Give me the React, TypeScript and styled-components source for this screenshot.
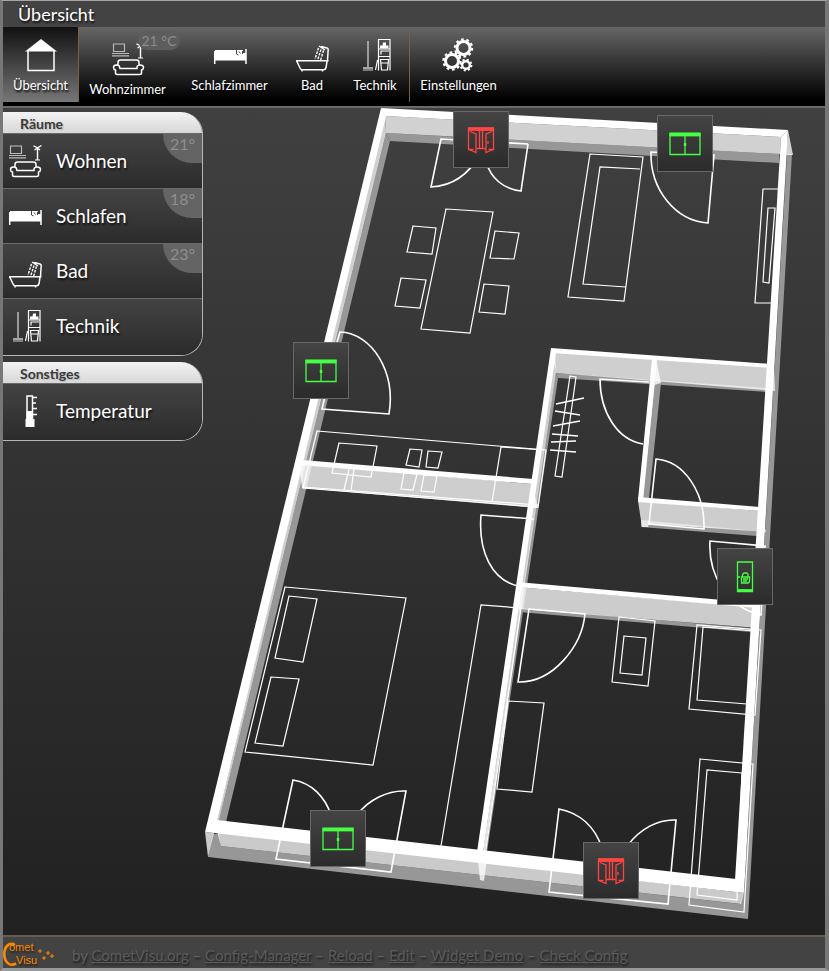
import React from "react";
import styled, { createGlobalStyle } from "styled-components";

const GlobalStyle = createGlobalStyle`
  * { box-sizing: border-box; }
  body {
    margin: 0;
    background: #444;
    color: #fff;
    font-family: Lato, "Open Sans", sans-serif;
  }
`;

const Page = styled.div`
  display: flex;
  flex-direction: column;
  min-height: 100vh;
  border-style: solid;
  border-width: 1px 4px 3px 3px;
  border-color: #a5a5a5 #777 #999 #777;
  background: #444;
`;

const TitleBar = styled.header`
  height: 26px;
  padding-left: 15px;
  background: #434343;
`;

const Title = styled.h1`
  margin: 0;
  font-size: 18px;
  line-height: 27px;
  font-weight: 400;
  text-shadow: 1px 2px 2px #111;
`;

const NavBar = styled.nav`
  display: flex;
  align-items: flex-start;
  height: 81px;
  border-bottom: 2px solid #6a6a6a;
  background: linear-gradient(#666, #000 92%);
`;

const NavItem = styled.button<{ $width: number; $active?: boolean; $divider?: boolean; $low?: boolean }>`
  position: relative;
  display: flex;
  flex-direction: column;
  align-items: center;
  gap: 4px;
  width: ${(p) => p.$width}px;
  height: 75px;
  padding: ${(p) => (p.$low ? 16 : 12)}px 0 0;
  border: 0;
  border-right: ${(p) => (p.$divider ? "1px solid #7b5f45" : "0")};
  background: ${(p) => (p.$active ? "linear-gradient(#111, #777)" : "transparent")};
  color: #fff;
  font: 13px/20px Lato, sans-serif;
  text-shadow: 1px 2px 2px #000;
  cursor: pointer;
`;

const NavBadge = styled.span`
  position: absolute;
  top: 4px;
  right: -4px;
  width: 42px;
  border-radius: 9px;
  background: #5d5d5d;
  color: #8c8c8c;
  font-size: 14px;
  line-height: 19px;
  text-shadow: none;
`;

const IconSvg = styled.svg`
  flex: none;
  width: 32px;
  height: 32px;
  overflow: visible;
  fill: none;
  stroke: #fff;
  stroke-width: 1.5;
`;

const Main = styled.main`
  display: flex;
  flex: 1;
  align-items: flex-start;
  background: linear-gradient(#404040, #212121);
`;

const Sidebar = styled.aside`
  display: flex;
  flex: none;
  flex-direction: column;
  gap: 6px;
  width: 200px;
  padding-top: 4px;
`;

const Group = styled.section`
  overflow: hidden;
  border: solid #b5b5b5;
  border-width: 0 1px 1px 0;
  border-radius: 0 22px 22px 0;
`;

const GroupTitle = styled.h2`
  margin: 0;
  padding-left: 17px;
  background: linear-gradient(#f2f2f2, #d8d8d8);
  color: #3b3b3b;
  font-size: 14px;
  line-height: 23px;
  height: 21px;
  font-weight: 700;
  text-shadow: 1px 1px 1px #bbb;
`;

const RoomRow = styled.button`
  position: relative;
  display: flex;
  align-items: center;
  gap: 15px;
  width: 100%;
  height: 55px;
  padding: 0 0 0 6px;
  border: 0;
  border-top: 1px solid #6a6a6a;
  background: linear-gradient(#434343, #2b2b2b);
  color: #fff;
  font: 19px/24px Lato, sans-serif;
  text-shadow: 1px 2px 2px #111;
  cursor: pointer;
  &:last-child {
    height: 57px;
    padding-bottom: 2px;
  }
`;

const RoomBadge = styled.span`
  position: absolute;
  top: 0;
  right: 0;
  width: 39px;
  height: 29px;
  border-radius: 0 0 0 30px;
  background: #646464;
  color: #8e8e8e;
  font-size: 16px;
  line-height: 20px;
  text-shadow: none;
`;

const Stage = styled.div`
  position: relative;
  flex: 1;
  max-width: 900px;
  aspect-ratio: 622 / 827;
`;

const PlanSvg = styled.svg`
  display: block;
  width: 100%;
  height: 100%;
`;

const Marker = styled.button<{ $x: number; $y: number }>`
  position: absolute;
  left: ${(p) => (p.$x / 622) * 100}%;
  top: ${(p) => (p.$y / 827) * 100}%;
  display: flex;
  align-items: center;
  justify-content: center;
  width: 56px;
  height: 57px;
  padding: 0;
  border: 1px solid #686868;
  background: linear-gradient(#444, #2b2b2b);
  cursor: pointer;
`;

const StatusSvg = styled.svg<{ $open?: boolean }>`
  width: 32px;
  height: 32px;
  fill: none;
  stroke: ${(p) => (p.$open ? "#f44" : "#4f4")};
  stroke-width: 1.3;
`;

const Footer = styled.footer`
  display: flex;
  align-items: center;
  gap: 5px;
  height: 33px;
  border-top: 2px solid #675c50;
  background: #434343;
  color: #606060;
  font-size: 15px;
  line-height: 20px;
  text-shadow: 1px 2px 2px #1c1c1c;
`;

const LogoSvg = styled.svg`
  width: 64px;
  height: 29px;
  overflow: visible;
`;

const Links = styled.p`
  margin: 0;
  padding-top: 4px;
`;

const FootLink = styled.a`
  color: #5a5a5a;
  text-decoration: underline;
`;

type IconName = "home" | "living" | "bed" | "bath" | "tech" | "gears" | "thermo";

const drawings: Record<IconName, React.ReactNode> = {
  home: (
    <>
      <path d="M0 12.5 16 0l16 12.5z" fill="#fff" stroke="none" />
      <path d="M3 12v19.500h26V12" />
    </>
  ),
  living: (
    <>
      <g stroke="#bbb" strokeWidth="1.200">
        <path d="M1.500 1h11v7.500h-11z" />
        <path d="M0 10.500h17M0 12.800h17" />
      </g>
      <path d="M28.500 2v13M24.500.800l4 2 4-2.300M25.500 5l3-2 2.500 2" strokeWidth="1.400" />
      <path d="M26 15h5" strokeWidth="1" />
      <path d="M6 22.500v-3q0-2.500 2.500-2.500h16q2.500 0 2.500 2.500v3M8 25.500h17v-1.500q.5-2 3-2 3.500 0 3.500 2.500 0 2-2 2.500v3q0 1.500-2 1.500h-22q-2 0-2-1.500v-3q-2-.5-2-2.500 0-2.500 3-2.500t3 2z" />
    </>
  ),
  bed: (
    <>
      <path d="M1 11h28v3h3v7.500H1z" fill="#fff" stroke="none" />
      <path d="M.7 12v13M32 10v15" />
      <path d="M22.500 11v4l2 1M25 12.500l1.500 2M28.500 12v3" stroke="#444" strokeWidth="1" />
    </>
  ),
  bath: (
    <>
      <path d="M0 21.800h32.500M.7 22l3.300 7q.7 1.800 2.500 1.800h21q2 0 2.500-2l1-6.500M6 31v1.500M26.500 31v1.500" />
      <path d="M31.500 21.500l.7-11.500-1.200-1-6-1.500M23 7l6 4" />
      <path d="M22.500 9l-3.500 11M25 10.500l-3.500 11M27.500 11.500l-3 10" strokeDasharray="2.500 1.200" strokeWidth="1.400" />
    </>
  ),
  tech: (
    <>
      <path d="M9 2v26" stroke="#bbb" />
      <path d="M4 29h10M5 28v4M7 28v4M9 28v4M11 28v4M13 28v4" stroke="#ccc" strokeWidth="1" />
      <path d="M19.500.500h11.500M19.500 0v31.500M31 0v31.500M19.500 10h11.500M19.500 17.500h11.500M16.500 31l2-10" strokeWidth="1.200" />
      <path d="M21 9.500v-3h2.500l.5-3h3v3h2.500v3z" fill="#fff" stroke="none" />
      <path d="M22 15.500v-3.500h8M21.500 20.500h8l-1 10.500h-6zM22 24h7" strokeWidth="1.200" />
    </>
  ),
  gears: (
    <>
      <circle cx="20.500" cy="9" r="6.500" strokeWidth="3" />
      <circle cx="20.500" cy="9" r="8.700" strokeWidth="2" strokeDasharray="2.733 2.733" />
      <circle cx="9" cy="22" r="6.500" strokeWidth="3" />
      <circle cx="9" cy="22" r="8.700" strokeWidth="2" strokeDasharray="2.733 2.733" />
      <circle cx="23" cy="26" r="3.800" strokeWidth="2.400" />
      <circle cx="23" cy="26" r="5.500" strokeWidth="1.800" strokeDasharray="2.160 2.160" />
    </>
  ),
  thermo: (
    <>
      <path d="M18 24V1h5.500v23" />
      <path d="M17.500 16h6.500v8h1.500v8h-9v-8h1z" fill="#fff" stroke="none" />
      <path d="M24 2.500h4M24 8h3M24 13.500h4M24 19.500h4" />
    </>
  ),
};

const Icon = ({ name }: { name: IconName }) => (
  <IconSvg viewBox="0 0 32 32" aria-hidden="true">{drawings[name]}</IconSvg>
);

const navItems: { label: string; icon: IconName; width: number; active?: boolean; divider?: boolean; badge?: string }[] = [
  { label: "Übersicht", icon: "home", width: 76, active: true, divider: true },
  { label: "Wohnzimmer", icon: "living", width: 97, badge: "21 °C" },
  { label: "Schlafzimmer", icon: "bed", width: 107 },
  { label: "Bad", icon: "bath", width: 58 },
  { label: "Technik", icon: "tech", width: 69, divider: true },
  { label: "Einstellungen", icon: "gears", width: 97 },
];

const groups: { title: string; rows: { label: string; icon: IconName; badge?: string }[] }[] = [
  {
    title: "Räume",
    rows: [
      { label: "Wohnen", icon: "living", badge: "21°" },
      { label: "Schlafen", icon: "bed", badge: "18°" },
      { label: "Bad", icon: "bath", badge: "23°" },
      { label: "Technik", icon: "tech" },
    ],
  },
  { title: "Sonstiges", rows: [{ label: "Temperatur", icon: "thermo" }] },
];

type MarkerKind = "window" | "open" | "door";
const markers: { x: number; y: number; kind: MarkerKind; label: string }[] = [
  { x: 250, y: 3, kind: "open", label: "Fenster Wohnzimmer" },
  { x: 454, y: 7, kind: "window", label: "Balkontür" },
  { x: 90, y: 234, kind: "window", label: "Terrassentür" },
  { x: 514, y: 440, kind: "door", label: "Haustür" },
  { x: 107, y: 702, kind: "window", label: "Fenster Schlafzimmer" },
  { x: 380, y: 734, kind: "open", label: "Fenster Bad" },
];

const StatusIcon = ({ kind }: { kind: MarkerKind }) => {
  if (kind === "window")
    return (
      <StatusSvg viewBox="0 0 32 32" aria-hidden="true">
        <path d="M1 5.500h30v21H1zM16 7v19" />
        <path d="M.5 6.500h31" strokeWidth="3.800" />
        <path d="M16 15v3" strokeWidth="2.500" />
      </StatusSvg>
    );
  if (kind === "open")
    return (
      <StatusSvg $open viewBox="0 0 32 32" aria-hidden="true">
        <path d="M3.500 4v21.500h5M28.500 4v21.500h-5M14.500 6v18.500M17.500 6v18.500M11.500 24.500h9" />
        <path d="M3 5h26" strokeWidth="3.800" />
        <path d="M5 7.500l6 2.500v18.500l-7-3M27 7.500l-6 2.500v18.500l7-3M23 17v3" />
      </StatusSvg>
    );
  return (
    <StatusSvg viewBox="0 0 32 32" aria-hidden="true">
      <path d="M8.500 1h15v29.500h-15z" />
      <path d="M8 29.500h16" strokeWidth="2.800" />
      <path d="M12.500 16v6h6.500q1.500 0 1.500-2v-4zM13.500 15.500v-2l1.500-1.500h3l1 1.500v2M14 18h5M14 20h4M8.500 16h2.500" />
    </StatusSvg>
  );
};

/* Wall shapes: dark foot faces, translucent side faces, then white tops. */
const darkFaces = [
  "386,133 779,154 779,163 390,141",
  "386,133 390,141 226,822 219,821",
  "787,154 792,154 748,919 740,904 744,893",
  "208,857 213,834 219,834 221,846 740,904 746,893 748,919",
  "556,373 767,388 766,392 558,378",
  "556,373 558,378 487,852 483,852",
  "655,385 661,383 649,498 643,498",
  "641,520 757,531 757,536 641,527",
  "519,608 751,628 751,632 519,612",
];
const lightFaces = [
  "385,116 781,137 780,154 386,133",
  "385,116 386,133 219,821 217,821",
  "788,130 793,155 786,155",
  "205,832 214,833 208,857",
  "217,831 744,893 741,904 221,846",
  "299,464 532,484 538,508 302,488",
  "552,352 774,367 775,391 556,373",
  "555,353 556,373 485,852 483,852",
  "656,359 661,383 655,385 643,500 643,490",
  "638,501 760,511 766,532 649,524 648,527 642,527",
  "517,587 754,607 758,628 519,609",
  "477,850 488,852 484,881 480,880",
];
const wallTops = [
  "381,108 788,130 781,137 385,116",
  "381,108 386,116 217,822 205,832",
  "205,832 217,820 736,879 744,893",
  "788,130 744,893 735,880 781,137",
  "302,460 533,479 532,484 300,465",
  "551,348 772,364 772,368 552,353",
  "551,348 556,353 483,853 477,852",
  "652,359 657,359 643,500 638,500",
  "638,497 760,507 760,511 638,502",
  "517,582 757,603 757,608 517,587",
];
const furniture = [
  "M446 209 493 212 470 333 421 329z",
  "M413 226 436 228 432 254 407 252z",
  "M401 278 426 280 420 308 395 306z",
  "M495 231 519 233 514 259 490 258z",
  "M484 284 509 286 505 314 479 312z",
  "M590 154 643 157 624 301 568 297z",
  "M640 169 600 167 583 284 626 287",
  "M778 189 763 189 755 303 771 303",
  "M775 208 768 208 763 282 769 283z",
  "M317 431 546 450 538 507 303 488z",
  "M544 450 501 447 492 502",
  "M339 443 377 446 371 477 332 473z",
  "M349 469 344 490M354 469 351 491",
  "M410 449 422 450 419 467 406 465z",
  "M428 451 442 452 438 468 426 467z",
  "M404 473 417 474 413 490 401 489z",
  "M424 475 437 476 434 492 421 491z",
  "M303 487 538 505",
  "M570 376 576 377 562 477 555 476z",
  "M285 587 406 598 373 765 245 752z",
  "M289 596 317 599 303 662 275 658z",
  "M271 677 299 679 283 746 255 743z",
  "M521 608 481 605 441 846M521 608 485 856",
  "M619 617 655 621 648 686 612 682z",
  "M624 636 646 638 642 675 620 673z",
  "M761 630 697 625 689 709 755 715z",
  "M756 631 703 627 697 700 747 704",
  "M508 701 544 703 532 792 497 789z",
  "M700 759 753 764 744 912 689 905z",
  "M742 773 707 770 697 895 737 900z",
];
const doors = [
  "M528 144 441 139 431 187C451 186 468 176 480 154M528 144 521 191C503 189 491 178 486 162",
  "M714 155 651 152C650 190 676 221 708 223z",
  "M337 342 340 332C372 333 396 372 389 414L322 409 325 396",
  "M556 404 584 398M555 411 580 415M553 426 580 421M552 434 578 436M551 442 576 441M550 450 576 452",
  "M649 382 600 379C600 413 618 440 643 444",
  "M656 459C684 461 705 492 704 529L649 524z",
  "M534 519 481 515C478 552 492 580 518 586",
  "M529 609 585 614C582 646 553 683 518 682z",
  "M765 546 710 541C708 575 727 607 761 615z",
];
const windows = [
  "M331 815C325 797 312 783 293 780L276 859 391 872 406 791C388 790 368 800 357 815",
  "M602 848C595 827 580 813 559 809L549 892 668 904 676 820C658 819 640 829 628 845",
];

const FloorPlan = () => (
  <PlanSvg viewBox="203 108 622 827" role="img" aria-label="Grundriss">
    <g fill="#979797">{darkFaces.map((p) => <polygon key={p} points={p} />)}</g>
    <g fill="#fff" fillOpacity="0.76">{lightFaces.map((p) => <polygon key={p} points={p} />)}</g>
    <g fill="#fff">{wallTops.map((p) => <polygon key={p} points={p} />)}</g>
    <g fill="none" stroke="#fff" strokeWidth="1.2">{furniture.map((d) => <path key={d} d={d} />)}</g>
    <g fill="none" stroke="#fff" strokeWidth="1.6">{[...doors, ...windows].map((d) => <path key={d} d={d} />)}</g>
  </PlanSvg>
);

const Logo = () => (
  <LogoSvg viewBox="0 0 64 29" role="img" aria-label="CometVisu">
    <path d="M12 7C6 3.500 1.300 9 1.300 16S6 29.500 13 25.500" fill="none" stroke="#f80" strokeWidth="2.600" />
    <g fill="#f80" fontFamily="Liberation Sans, sans-serif" fontSize="11">
      <text x="6" y="13">omet</text>
      <text x="13" y="26">Visu</text>
    </g>
    <path d="M37 11v4M35 13h4M41 18v4M39 20h4M45 13v4M43 15h4M49 16v4M47 18h4" stroke="#f80" fill="none" />
  </LogoSvg>
);

const links = ["CometVisu.org", "Config-Manager", "Reload", "Edit", "Widget Demo", "Check Config"];

export default function App() {
  return (
    <>
      <GlobalStyle />
      <Page>
        <TitleBar>
          <Title>Übersicht</Title>
        </TitleBar>
        <NavBar>
          {navItems.map((n) => (
            <NavItem key={n.label} type="button" $width={n.width} $active={n.active} $divider={n.divider} $low={!!n.badge}>
              <Icon name={n.icon} />
              {n.label}
              {n.badge && <NavBadge>{n.badge}</NavBadge>}
            </NavItem>
          ))}
        </NavBar>
        <Main>
          <Sidebar>
            {groups.map((g) => (
              <Group key={g.title}>
                <GroupTitle>{g.title}</GroupTitle>
                {g.rows.map((r) => (
                  <RoomRow key={r.label} type="button">
                    <Icon name={r.icon} />
                    {r.label}
                    {r.badge && <RoomBadge>{r.badge}</RoomBadge>}
                  </RoomRow>
                ))}
              </Group>
            ))}
          </Sidebar>
          <Stage>
            <FloorPlan />
            {markers.map((m) => (
              <Marker key={m.label} type="button" aria-label={m.label} $x={m.x} $y={m.y}>
                <StatusIcon kind={m.kind} />
              </Marker>
            ))}
          </Stage>
        </Main>
        <Footer>
          <Logo />
          <Links>
            by{" "}
            {links.map((l, i) => (
              <React.Fragment key={l}>
                {i > 0 && " – "}
                <FootLink href="#">{l}</FootLink>
              </React.Fragment>
            ))}
          </Links>
        </Footer>
      </Page>
    </>
  );
}
